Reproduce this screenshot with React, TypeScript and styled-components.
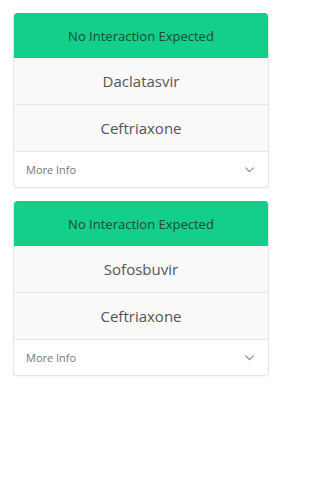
import React from 'react';
import styled, { createGlobalStyle } from 'styled-components';

const GlobalStyle = createGlobalStyle`
  body {
    margin: 0;
    background: #ffffff;
    font-family: "Open Sans", "Liberation Sans", sans-serif;
  }
`;

const Page = styled.div`
  width: 256px;
  display: flex;
  flex-direction: column;
  gap: 13px;
  padding: 13px;
`;

const Card = styled.div`
  border: 1px solid #e6e6e6;
  border-top: none;
  border-radius: 4px;
  overflow: hidden;
  background: #fff;
  box-shadow: 0 1px 2px rgba(0, 0, 0, 0.04);
`;

const Header = styled.div`
  height: 45px;
  margin: 0 -1px;
  background: #14cf89;
  color: #1c4a36;
  display: flex;
  align-items: center;
  justify-content: center;
  font-size: 13px;
  border-radius: 4px 4px 0 0;
`;

const DrugRow = styled.div`
  height: 46px;
  background: #f9f9f9;
  border-bottom: 1px solid #e8e8e8;
  display: flex;
  align-items: center;
  justify-content: center;
  font-size: 15px;
  color: #555;
`;

const InfoRow = styled.div`
  height: 35px;
  display: flex;
  align-items: center;
  justify-content: space-between;
  padding: 0 12px;
  font-size: 11px;
  color: #777;
`;

const Chevron = styled.svg`
  width: 13px;
  height: 13px;
  stroke: #888;
`;

const interactions = [
  { drugs: ['Daclatasvir', 'Ceftriaxone'] },
  { drugs: ['Sofosbuvir', 'Ceftriaxone'] },
];

const App: React.FC = () => (
  <>
    <GlobalStyle />
    <Page>
      {interactions.map((item, i) => (
        <Card key={i}>
          <Header>No Interaction Expected</Header>
          {item.drugs.map((d) => (
            <DrugRow key={d}>{d}</DrugRow>
          ))}
          <InfoRow>
            <span>More Info</span>
            <Chevron viewBox="0 0 24 24" fill="none" strokeWidth="2.2" strokeLinecap="round" strokeLinejoin="round">
              <polyline points="5 9 12 16 19 9" />
            </Chevron>
          </InfoRow>
        </Card>
      ))}
    </Page>
  </>
);

export default App;
